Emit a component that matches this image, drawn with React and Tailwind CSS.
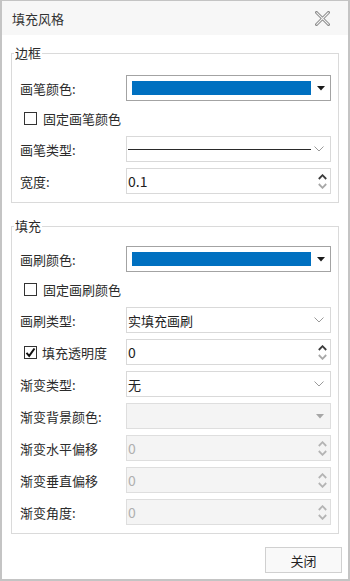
import React from "react";

const FONT = { fontFamily: '"Noto Sans CJK SC", "Noto Sans", sans-serif' };

function ChevronDown({ color = "#9a9a9a" }) {
  return (
    <svg width="10" height="6" viewBox="0 0 10 6" className="block">
      <polyline points="0.5,0.5 5,5 9.5,0.5" fill="none" stroke={color} strokeWidth="1" />
    </svg>
  );
}

function Spinner({ upColor = "#3c3c3c", downColor = "#a8a8a8" }) {
  return (
    <div className="flex flex-col items-center gap-[3px] pt-[1px]">
      <svg width="9" height="6" viewBox="0 0 9 6" className="block">
        <polyline points="0.8,5 4.5,1.2 8.2,5" fill="none" stroke={upColor} strokeWidth="1.8" />
      </svg>
      <svg width="9" height="6" viewBox="0 0 9 6" className="block">
        <polyline points="0.8,1 4.5,4.8 8.2,1" fill="none" stroke={downColor} strokeWidth="1.8" />
      </svg>
    </div>
  );
}

function Triangle({ color = "#1a1a1a" }) {
  return (
    <svg width="8" height="5" viewBox="0 0 8 5" className="block">
      <polygon points="0,0 8,0 4,4.5" fill={color} />
    </svg>
  );
}

function ColorPicker() {
  return (
    <div className="flex h-[26px] w-[205px] items-center border border-[#a3a3a3] bg-white pl-[5px] pr-[5px]">
      <div className="h-[14px] w-[179px] bg-[#0070c0]" />
      <div className="flex flex-1 justify-end pt-[1px]">
        <Triangle />
      </div>
    </div>
  );
}

function Combo({ children, disabled }) {
  return (
    <div
      className={
        "flex h-[26px] w-[205px] items-center border pl-[1px] pr-[6px] " +
        (disabled ? "border-[#dedede] bg-[#f4f4f4]" : "border-[#d9d9d9] bg-white")
      }
    >
      <div className="flex-1 text-[13px] text-[#222] leading-none">{children}</div>
      {disabled ? <Triangle color="#a6a6a6" /> : <ChevronDown />}
    </div>
  );
}

function NumberBox({ value, disabled }) {
  return (
    <div
      className={
        "flex h-[26px] w-[205px] items-center border pl-[1px] pr-[3px] " +
        (disabled ? "border-[#dedede] bg-[#f4f4f4]" : "border-[#d9d9d9] bg-white")
      }
    >
      <div
        className={"flex-1 text-[14px] leading-none " + (disabled ? "text-[#b0b0b0]" : "text-[#1e1e1e]")}
      >
        {value}
      </div>
      {disabled ? <Spinner upColor="#b4b4b4" downColor="#b4b4b4" /> : <Spinner />}
    </div>
  );
}

function Label({ children }) {
  return <div className="w-[106px] text-[13px] leading-none text-[#2b2b2b]">{children}</div>;
}

function Row({ label, children }) {
  return (
    <div className="flex h-[26px] items-center">
      <Label>{label}</Label>
      {children}
    </div>
  );
}

function CheckBox({ checked }) {
  return (
    <div className="flex h-[13px] w-[13px] items-center justify-center border border-[#333] bg-white">
      {checked && (
        <svg width="11" height="11" viewBox="0 0 11 11" className="block">
          <path d="M1.5 5.8 L4.2 8.8 L9.5 1.5" fill="none" stroke="#111" strokeWidth="2" />
        </svg>
      )}
    </div>
  );
}

function CheckRow({ label }) {
  return (
    <div className="flex h-[35px] items-center pl-[4px]">
      <CheckBox />
      <span className="ml-[6px] text-[13px] leading-none text-[#2b2b2b]">{label}</span>
    </div>
  );
}

function Group({ title, children, className = "" }) {
  return (
    <div className={"mx-[9px] border border-[#dadada] " + className}>
      <div className="ml-[2px] -mt-[10px] w-fit bg-white px-[1px] text-[13px] leading-[18px] text-[#2b2b2b]">
        {title}
      </div>
      {children}
    </div>
  );
}

export default function App() {
  return (
    <div
      className="flex h-[581px] w-[350px] flex-col border-x-2 border-b-2 border-t border-[#c4c4c4] bg-white"
      style={FONT}
    >
      <div className="flex h-[34px] shrink-0 items-center justify-between bg-[#f7f7f7] pl-[10px] pr-[18px]">
        <span className="text-[13px] leading-none text-[#333]">填充风格</span>
        <svg width="15" height="15" viewBox="0 0 15 15" className="block">
          <path d="M1.5 1.5 L13.5 13.5 M13.5 1.5 L1.5 13.5" stroke="#8a8a8a" strokeWidth="3" strokeLinecap="square" />
          <path d="M1.8 1.8 L13.2 13.2 M13.2 1.8 L1.8 13.2" stroke="#f7f7f7" strokeWidth="1.1" strokeLinecap="square" />
        </svg>
      </div>

      <Group title="边框" className="mt-[18px]">
        <div className="mt-[13px] pb-[8px] pl-[8px]">
          <Row label="画笔颜色:">
            <ColorPicker />
          </Row>
          <CheckRow label="固定画笔颜色" />
          <div className="flex flex-col gap-[6px]">
            <Row label="画笔类型:">
              <div className="flex h-[26px] w-[205px] items-center border border-[#d9d9d9] bg-white pl-[1px] pr-[6px]">
                <div className="mr-[3px] h-px flex-1 bg-[#2a2a2a]" />
                <ChevronDown />
              </div>
            </Row>
            <Row label="宽度:">
              <NumberBox value="0.1" />
            </Row>
          </div>
        </div>
      </Group>

      <Group title="填充" className="mt-[23px]">
        <div className="mt-[11px] pb-[8px] pl-[8px]">
          <Row label="画刷颜色:">
            <ColorPicker />
          </Row>
          <CheckRow label="固定画刷颜色" />
          <div className="flex flex-col gap-[6px]">
            <Row label="画刷类型:">
              <Combo>实填充画刷</Combo>
            </Row>
            <div className="flex h-[26px] items-center">
              <div className="flex w-[106px] items-center pl-[4px]">
                <CheckBox checked />
                <span className="ml-[5px] text-[13px] leading-none text-[#2b2b2b]">填充透明度</span>
              </div>
              <NumberBox value="0" />
            </div>
            <Row label="渐变类型:">
              <Combo>无</Combo>
            </Row>
            <Row label="渐变背景颜色:">
              <Combo disabled />
            </Row>
            <Row label="渐变水平偏移">
              <NumberBox value="0" disabled />
            </Row>
            <Row label="渐变垂直偏移">
              <NumberBox value="0" disabled />
            </Row>
            <Row label="渐变角度:">
              <NumberBox value="0" disabled />
            </Row>
          </div>
        </div>
      </Group>

      <div className="mt-[13px] flex justify-end pr-[6px]">
        <button className="flex h-[26px] w-[77px] items-center justify-center border border-[#d0d0d0] bg-[#f9f9f9] text-[13px] leading-none text-[#222]">
          关闭
        </button>
      </div>
    </div>
  );
}
